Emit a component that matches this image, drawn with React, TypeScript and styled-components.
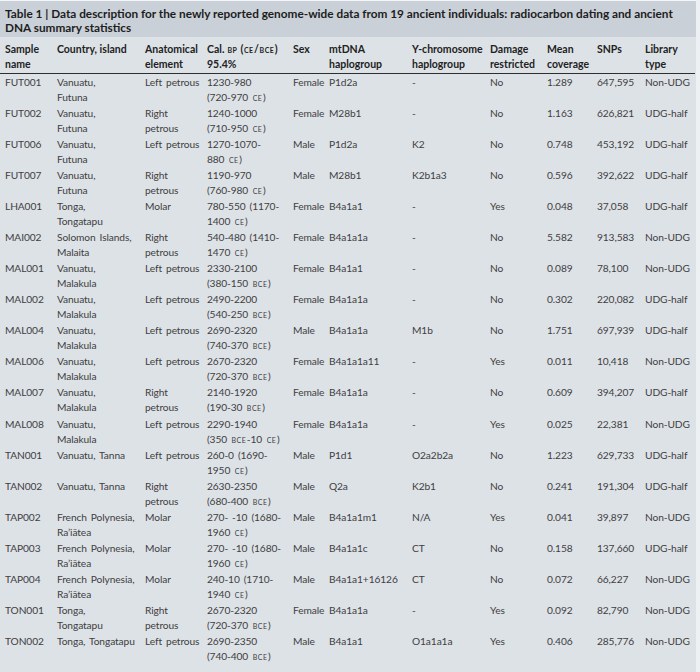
import React from "react";
import styled, { createGlobalStyle } from "styled-components";

const GlobalStyle = createGlobalStyle`
  html, body {
    margin: 0;
    padding: 0;
    background: #eef1f3;
  }
  body {
    font-family: Lato, "Liberation Sans", sans-serif;
  }
`;

const COLUMNS = "52px 88px 62px 86px 36px 83px 78px 57px 50px 48px 1fr";

const headers = [
  "Sample\nname",
  "Country, island",
  "Anatomical\nelement",
  "Cal. BP (CE/BCE)\n95.4%",
  "Sex",
  "mtDNA\nhaplogroup",
  "Y-chromosome\nhaplogroup",
  "Damage\nrestricted",
  "Mean\ncoverage",
  "SNPs",
  "Library\ntype",
];

const rows: string[][] = [
  ["FUT001", "Vanuatu,\nFutuna", "Left petrous", "1230-980\n(720-970 CE)", "Female", "P1d2a", "-", "No", "1.289", "647,595", "Non-UDG"],
  ["FUT002", "Vanuatu,\nFutuna", "Right\npetrous", "1240-1000\n(710-950 CE)", "Female", "M28b1", "-", "No", "1.163", "626,821", "UDG-half"],
  ["FUT006", "Vanuatu,\nFutuna", "Left petrous", "1270-1070-\n880 CE)", "Male", "P1d2a", "K2", "No", "0.748", "453,192", "UDG-half"],
  ["FUT007", "Vanuatu,\nFutuna", "Right\npetrous", "1190-970\n(760-980 CE)", "Male", "M28b1", "K2b1a3", "No", "0.596", "392,622", "UDG-half"],
  ["LHA001", "Tonga,\nTongatapu", "Molar", "780-550 (1170-\n1400 CE)", "Female", "B4a1a1", "-", "Yes", "0.048", "37,058", "UDG-half"],
  ["MAI002", "Solomon Islands,\nMalaita", "Right\npetrous", "540-480 (1410-\n1470 CE)", "Female", "B4a1a1a", "-", "No", "5.582", "913,583", "Non-UDG"],
  ["MAL001", "Vanuatu,\nMalakula", "Left petrous", "2330-2100\n(380-150 BCE)", "Female", "B4a1a1", "-", "No", "0.089", "78,100", "Non-UDG"],
  ["MAL002", "Vanuatu,\nMalakula", "Left petrous", "2490-2200\n(540-250 BCE)", "Female", "B4a1a1a", "-", "No", "0.302", "220,082", "UDG-half"],
  ["MAL004", "Vanuatu,\nMalakula", "Left petrous", "2690-2320\n(740-370 BCE)", "Male", "B4a1a1a", "M1b", "No", "1.751", "697,939", "UDG-half"],
  ["MAL006", "Vanuatu,\nMalakula", "Left petrous", "2670-2320\n(720-370 BCE)", "Female", "B4a1a1a11", "-", "Yes", "0.011", "10,418", "Non-UDG"],
  ["MAL007", "Vanuatu,\nMalakula", "Right\npetrous", "2140-1920\n(190-30 BCE)", "Female", "B4a1a1a", "-", "No", "0.609", "394,207", "UDG-half"],
  ["MAL008", "Vanuatu,\nMalakula", "Left petrous", "2290-1940\n(350 BCE-10 CE)", "Female", "B4a1a1a", "-", "Yes", "0.025", "22,381", "Non-UDG"],
  ["TAN001", "Vanuatu, Tanna", "Left petrous", "260-0 (1690-\n1950 CE)", "Male", "P1d1", "O2a2b2a", "No", "1.223", "629,733", "UDG-half"],
  ["TAN002", "Vanuatu, Tanna", "Right\npetrous", "2630-2350\n(680-400 BCE)", "Male", "Q2a", "K2b1", "No", "0.241", "191,304", "UDG-half"],
  ["TAP002", "French Polynesia,\nRa\u2019i\u0101tea", "Molar", "270- -10 (1680-\n1960 CE)", "Male", "B4a1a1m1", "N/A", "Yes", "0.041", "39,897", "Non-UDG"],
  ["TAP003", "French Polynesia,\nRa\u2019i\u0101tea", "Molar", "270- -10 (1680-\n1960 CE)", "Male", "B4a1a1c", "CT", "No", "0.158", "137,660", "UDG-half"],
  ["TAP004", "French Polynesia,\nRa\u2019i\u0101tea", "Molar", "240-10 (1710-\n1940 CE)", "Male", "B4a1a1+16126", "CT", "No", "0.072", "66,227", "Non-UDG"],
  ["TON001", "Tonga,\nTongatapu", "Right\npetrous", "2670-2320\n(720-370 BCE)", "Female", "B4a1a1a", "-", "Yes", "0.092", "82,790", "Non-UDG"],
  ["TON002", "Tonga, Tongatapu", "Left petrous", "2690-2350\n(740-400 BCE)", "Male", "B4a1a1", "O1a1a1a", "Yes", "0.406", "285,776", "Non-UDG"],
];

// one block per text line; era markers (BP, CE, BCE) set in small capitals
function CellText({ text }: { text: string }) {
  return (
    <>
      {text.split("\n").map((line, li) => (
        <Line key={li}>
          {line
            .split(/\b(BCE|CE|BP)\b/)
            .filter((p) => p !== "")
            .map((p, i) =>
              /^(BCE|CE|BP)$/.test(p) ? (
                <SmallCaps key={i}>{p.toLowerCase()}</SmallCaps>
              ) : (
                <span key={i}>{p}</span>
              )
            )}
        </Line>
      ))}
    </>
  );
}

function App() {
  return (
    <>
      <GlobalStyle />
      <Panel>
        <Caption>
          <Line>
            Table 1 | Data description for the newly reported genome-wide data from 19 ancient individuals: radiocarbon dating and ancient
          </Line>
          <Line>DNA summary statistics</Line>
        </Caption>
        <HeadRow>
          {headers.map((h, i) => (
            <HeadCell key={i}>
              <CellText text={h} />
            </HeadCell>
          ))}
        </HeadRow>
        {rows.map((r) => (
          <Row key={r[0]}>
            {r.map((c, i) => (
              <Cell key={i}>
                <CellText text={c} />
              </Cell>
            ))}
          </Row>
        ))}
      </Panel>
    </>
  );
}

const Panel = styled.div`
  width: 696px;
  height: 672px;
  overflow: hidden;
  box-sizing: border-box;
  border-top: 1px solid #f3f5f7;
  background: #dde2e7;
  color: #404040;
`;

const Caption = styled.div`
  box-sizing: border-box;
  height: 36px;
  padding: 6px 5px 0;
  background: #c9d0d7;
  color: #1d1d1d;
  font-size: 11.8px;
  font-weight: 700;
  line-height: 14px;
`;

const Line = styled.div`
  white-space: pre;
`;

const HeadRow = styled.div`
  display: grid;
  grid-template-columns: ${COLUMNS};
  padding: 5px 0 1px 5px;
  border-bottom: 1px solid #2e2e2e;
  margin-right: 1px;
`;

const HeadCell = styled.div`
  font-size: 10.5px;
  font-weight: 700;
  line-height: 15px;
  color: #222;
`;

const Row = styled.div`
  display: grid;
  grid-template-columns: ${COLUMNS};
  height: 31.1px;
  padding: 0.5px 0 0 5px;
  box-sizing: border-box;
`;

const Cell = styled.div`
  font-size: 10.2px;
  letter-spacing: -0.1px;
  word-spacing: 1.5px;
  line-height: 15px;
`;

const SmallCaps = styled.span`
  font-variant-caps: all-small-caps;
  letter-spacing: 0.05em;
  margin: 0 0.5px;
`;

export default App;
